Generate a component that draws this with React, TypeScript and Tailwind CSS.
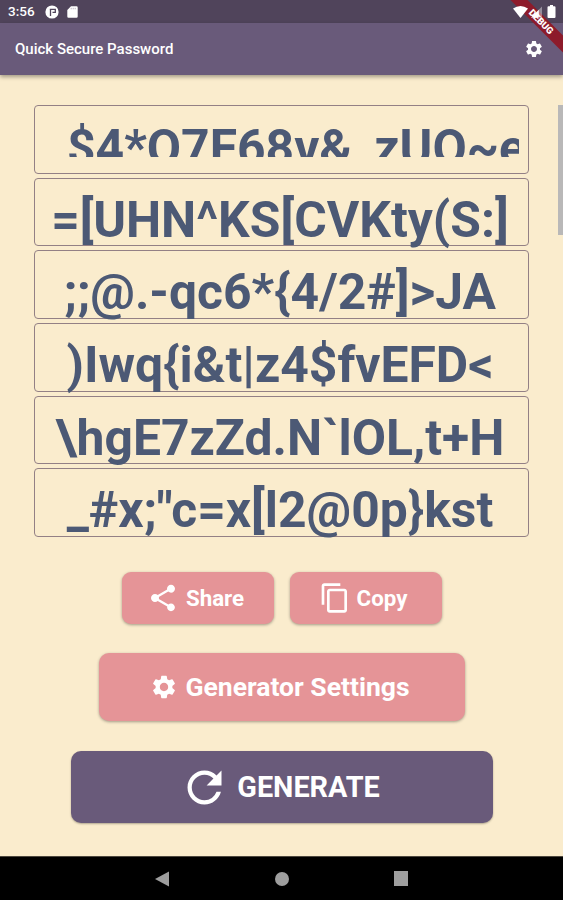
import type { ReactNode } from "react";
import { MdContentCopy, MdRefresh, MdSettings, MdShare } from "react-icons/md";

const passwordLines = [
  "=[UHN^KS[CVKty(S:]",
  ";;@.-qc6*{4/2#]>JA",
  ")Iwq{i&t|z4$fvEFD<",
  "\\hgE7zZd.N`lOL,t+H",
  "_#x;\"c=x[l2@0p}kst",
];

function StatusBar() {
  return (
    <div className="h-[23px] bg-[#50445b] flex items-center justify-between pl-2 pr-[7px] text-white">
      <div className="flex items-center">
        <span className="w-[37px] text-[13.500px] leading-none font-medium">3:56</span>
        <svg width="14" height="14" viewBox="0 0 14 14">
          <circle cx="7" cy="7" r="6.6" fill="#fff" />
          <path d="M5.500 11V4.500M4.800 4.300H10.300V7.300H7.500" fill="none" stroke="#50445b" strokeWidth="1.3" />
        </svg>
        <svg className="ml-2" width="11" height="12" viewBox="0 0 11 12">
          <path d="M4 .3h5.5a1.2 1.2 0 0 1 1.2 1.2v9a1.2 1.2 0 0 1-1.2 1.2h-8A1.2 1.2 0 0 1 .3 10.500V4z" fill="#fff" />
          <path d="M4.200 1.800v1.500M6.200 1.800v1.500M8.200 1.800v1.500" stroke="#50445b" strokeWidth=".4" />
        </svg>
      </div>
      <div className="relative z-20 flex items-center">
        <svg width="15" height="12" viewBox="0 0 15 12">
          <path d="M0 2.500Q7.500-2.500 15 2.500L7.500 12z" fill="#fff" />
        </svg>
        <svg className="ml-[3px]" width="11" height="12" viewBox="0 0 12 12">
          <path d="M12 0v12H0z" fill="#fff" fillOpacity=".4" />
          <path d="M8.500 3.500V12H0z" fill="#fff" />
        </svg>
        <svg className="ml-[5px]" width="9" height="13" viewBox="0 0 9 13">
          <path d="M3 0h3v1.300h1.500q1 0 1 1V12q0 1-1 1h-6q-1 0-1-1V2.300q0-1 1-1H3z" fill="#fff" />
        </svg>
      </div>
    </div>
  );
}

function DebugBanner() {
  return (
    <div className="absolute top-0 right-0 w-[60px] h-[60px] overflow-hidden z-10">
      <div className="absolute top-[16px] -left-[2px] w-[80px] h-3 rotate-45 bg-[#8d1b2b] text-white text-[9.500px] leading-3 font-black text-center">
        DEBUG
      </div>
    </div>
  );
}

function PasswordRow({ children }: { children: ReactNode }) {
  return (
    <div className="h-[68.7px] rounded-[4px] border border-[#938085] pr-[3px] text-center text-[49.8px] leading-[82px] font-bold text-[#4c5975] whitespace-pre">
      {children}
    </div>
  );
}

export default function App() {
  return (
    <div className="relative w-[563px] h-[900px] overflow-hidden flex flex-col bg-[#faeccd] font-['Roboto',sans-serif]">
      <DebugBanner />
      <StatusBar />
      <header className="relative h-[52px] bg-[#695a7a] flex items-center justify-between pl-[15px] pr-[19px] text-white shadow-[0_2px_4px_rgba(0,0,0,0.35)]">
        <h1 className="text-[15px] font-medium">Quick Secure Password</h1>
        <MdSettings size={20} />
      </header>

      <main className="relative flex-1 flex flex-col items-center pt-[30px]">
        <div className="absolute right-0 top-[30px] w-[5px] h-[130px] bg-[#b9b8b8]" />

        <div className="w-[495px] flex flex-col gap-1">
          <PasswordRow>
            {/* the first line is clipped by its own scroll area */}
            <div className="ml-[9px] mr-[6px] h-[51px] overflow-hidden text-left leading-[85px] pl-[23px]">$4*O7F68v&_zUO~e</div>
          </PasswordRow>
          {passwordLines.map((line) => (
            <PasswordRow key={line}>{line}</PasswordRow>
          ))}
        </div>

        <div className="mt-[35px] flex gap-4">
          <button className="w-[152px] h-[52px] rounded-[9px] bg-[#e59497] text-white flex items-center justify-center gap-[7px] pr-[4px] shadow-[0_1px_3px_rgba(0,0,0,0.35)]">
            <MdShare size={32} />
            <span className="pt-px text-[22.3px] font-bold">Share</span>
          </button>
          <button className="w-[152px] h-[52px] rounded-[9px] bg-[#e59497] text-white flex items-center justify-center gap-[6px] pr-[5px] shadow-[0_1px_3px_rgba(0,0,0,0.35)]">
            <MdContentCopy size={32} />
            <span className="pt-px text-[22.3px] font-bold">Copy</span>
          </button>
        </div>

        <button className="mt-[29px] w-[366px] h-[68px] rounded-[10px] bg-[#e59497] text-white flex items-center justify-center gap-[7px] pr-[3px] shadow-[0_1px_3px_rgba(0,0,0,0.35)]">
          <MdSettings size={28} />
          <span className="text-[26.5px] font-bold">Generator Settings</span>
        </button>

        <button className="mt-[30px] w-[422px] h-[72px] rounded-[10px] bg-[#695a7a] text-white flex items-center justify-center gap-[7px] pr-[4px] shadow-[0_1px_2px_rgba(0,0,0,0.3)]">
          <MdRefresh size={51} />
          <span className="text-[28.8px] font-bold">GENERATE</span>
        </button>
      </main>

      <nav className="h-11 bg-black border-t border-[#4d483f] flex items-center justify-center gap-[105px] text-[#9e9e9e]">
        <svg width="15" height="16" viewBox="0 0 15 16">
          <path d="M0 8 14 .5v15z" fill="currentColor" />
        </svg>
        <span className="w-[14px] h-[14px] rounded-full bg-[#9e9e9e]" />
        <span className="w-[14px] h-[15px] bg-[#9e9e9e]" />
      </nav>
    </div>
  );
}
